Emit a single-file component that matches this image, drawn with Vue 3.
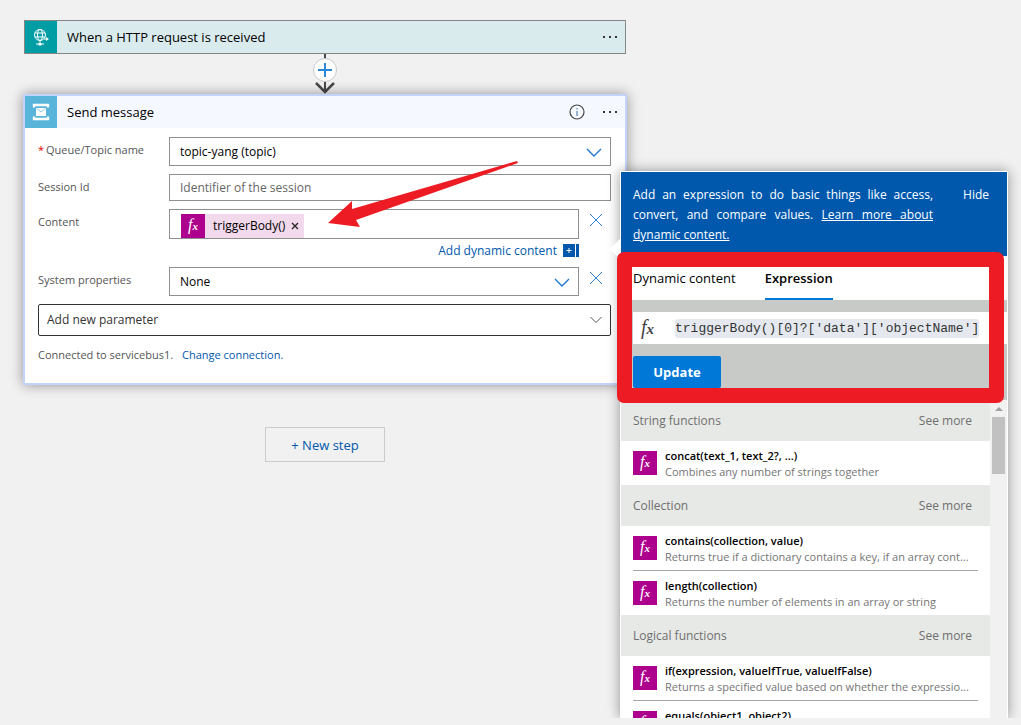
<script setup>
import { ref } from 'vue'

const topic = ref('topic-yang (topic)')
const sessionId = ref('')
const systemProps = ref('None')
const newParam = ref('Add new parameter')
const expression = ref("triggerBody()[0]?['data']['objectName']")
const activeTab = ref('Expression')
const tabs = ['Dynamic content', 'Expression']

const groups = [
  {
    name: 'String functions',
    items: [
      { name: 'concat(text_1, text_2?, ...)', desc: 'Combines any number of strings together' },
    ],
  },
  {
    name: 'Collection',
    items: [
      {
        name: 'contains(collection, value)',
        desc: 'Returns true if a dictionary contains a key, if an array cont...',
      },
      { name: 'length(collection)', desc: 'Returns the number of elements in an array or string' },
    ],
  },
  {
    name: 'Logical functions',
    items: [
      {
        name: 'if(expression, valueIfTrue, valueIfFalse)',
        desc: 'Returns a specified value based on whether the expressio...',
      },
      { name: 'equals(object1, object2)', desc: 'Returns true if two values are equal' },
    ],
  },
]
</script>

<template>
  <div class="page">
    <main class="flow">
      <section class="trigger">
        <span class="trigger-icon">
          <svg width="18" height="20" viewBox="0 0 18 20" fill="none" stroke="#fff">
            <circle cx="8" cy="8" r="5.500" />
            <ellipse cx="8" cy="8" rx="2.500" ry="5.500" />
            <path d="M3 6h10M3 10h10M8 13.500v3M4 17h8" />
            <path d="M12 12h3" />
            <path d="M14 10l3 2-3 2z" fill="#fff" stroke="none" />
            <path d="M6.500 16h3v2.500h-3z" fill="#fff" stroke="none" />
          </svg>
        </span>
        <h2>When a HTTP request is received</h2>
        <button class="dots" aria-label="Trigger menu"><i /><i /><i /></button>
      </section>

      <div class="connector">
        <svg width="26" height="40" viewBox="0 0 26 40" fill="none">
          <path d="M13 0v37" stroke="#484848" stroke-width="2" />
          <path d="M4 29l9 9 9-9" stroke="#484848" stroke-width="2.500" />
          <circle cx="13" cy="16" r="11.500" fill="#fff" stroke="#c8c8c8" />
          <path d="M6 16h14M13 9v14" stroke="#2b88d8" stroke-width="2" />
        </svg>
      </div>

      <section class="card">
        <header class="card-head">
          <span class="card-icon">
            <svg width="18" height="18" viewBox="0 0 18 18">
              <path d="M2 4.500V2h14v2.500M2 13.500V16h14v-2.500" fill="none" stroke="#fff" stroke-width="2.400" />
              <rect x="4" y="5" width="10" height="8" fill="#fff" />
              <path d="M4.500 5.500L9 9l4.500-3.500" fill="none" stroke="#8fcbe5" />
            </svg>
          </span>
          <h2>Send message</h2>
          <button class="info" aria-label="Information">
            <svg width="16" height="16" viewBox="0 0 16 16" fill="none">
              <circle cx="8" cy="8" r="7" stroke="#444" stroke-width="1.200" />
              <path d="M8 7v5M8 4v1.500" stroke="#3a6ea5" />
            </svg>
          </button>
          <button class="dots" aria-label="Action menu"><i /><i /><i /></button>
        </header>

        <div class="form">
          <div class="row">
            <label for="topic"><span class="required">*</span>Queue/Topic name</label>
            <div class="control">
              <select id="topic" v-model="topic" class="box">
                <option>topic-yang (topic)</option>
              </select>
              <svg class="chevron" width="16" height="10" viewBox="0 0 16 10">
                <path d="M1 1l7 7 7-7" fill="none" stroke="#1f77d0" stroke-width="1.400" />
              </svg>
            </div>
          </div>

          <div class="row">
            <label for="session">Session Id</label>
            <div class="control">
              <input
                id="session"
                v-model="sessionId"
                class="box session"
                placeholder="Identifier of the session"
              >
            </div>
          </div>

          <div class="row">
            <label id="content-label">Content</label>
            <div class="control">
              <div class="box token-box" role="group" aria-labelledby="content-label">
                <span class="token">
                  <span class="fx">f<small>x</small></span>
                  <span>triggerBody()</span>
                  <button aria-label="Remove token">
                    <svg width="8" height="8" viewBox="0 0 8 8">
                      <path d="M1 1l6 6M7 1l-6 6" stroke="#222" stroke-width="1.300" />
                    </svg>
                  </button>
                </span>
              </div>
              <a href="#" class="add-dynamic">
                Add dynamic content
                <svg width="16" height="13" viewBox="0 0 16 13">
                  <path d="M0 0h12v13H0zM13 0h3v13h-3z" fill="#0058ad" />
                  <path d="M3.500 6.500h5M6 4v5" stroke="#fff" />
                </svg>
              </a>
            </div>
            <button class="clear" aria-label="Remove content">
              <svg width="14" height="14" viewBox="0 0 14 14">
                <path d="M1 1l12 12M13 1L1 13" stroke="#2f80d0" />
              </svg>
            </button>
          </div>

          <div class="row">
            <label for="system">System properties</label>
            <div class="control">
              <select id="system" v-model="systemProps" class="box">
                <option>None</option>
              </select>
              <svg class="chevron" width="16" height="10" viewBox="0 0 16 10">
                <path d="M1 1l7 7 7-7" fill="none" stroke="#1f77d0" stroke-width="1.400" />
              </svg>
            </div>
            <button class="clear" aria-label="Remove system properties">
              <svg width="14" height="14" viewBox="0 0 14 14">
                <path d="M1 1l12 12M13 1L1 13" stroke="#2f80d0" />
              </svg>
            </button>
          </div>

          <div class="control add-param">
            <select v-model="newParam" class="box" aria-label="Add new parameter">
              <option>Add new parameter</option>
            </select>
            <svg class="chevron" width="12" height="8" viewBox="0 0 12 8">
              <path d="M0.500 1L6 6.500 11.500 1" fill="none" stroke="#555" />
            </svg>
          </div>

          <p class="connection">
            Connected to servicebus1. <a href="#">Change connection.</a>
          </p>
        </div>

        <svg class="arrow" width="194" height="70" viewBox="0 0 194 70">
          <path d="M1 62L25 40 25 48 190 0 191 2 29 59 33 66z" fill="#ed1c24" />
        </svg>
      </section>

      <button class="new-step">+ New step</button>
    </main>

    <aside class="panel">
      <span class="callout" />
      <header class="panel-head">
        <p>
          Add an expression to do basic things like access, convert, and compare values.
          <a href="#">Learn more about dynamic content.</a>
        </p>
        <button>Hide</button>
      </header>

      <nav class="tabs">
        <button
          v-for="tab in tabs"
          :key="tab"
          :class="{ active: tab === activeTab }"
          @click="activeTab = tab"
        >
          {{ tab }}
        </button>
      </nav>

      <div class="editor">
        <div class="expression">
          <label for="expression" class="fx-dark">f<small>x</small></label>
          <input id="expression" v-model="expression" spellcheck="false">
        </div>
        <button class="update">Update</button>
      </div>

      <div class="functions">
        <div class="list">
          <section v-for="group in groups" :key="group.name">
            <header class="group-head">
              <h3>{{ group.name }}</h3>
              <a href="#">See more</a>
            </header>
            <ul>
              <li v-for="item in group.items" :key="item.name">
                <span class="fx">f<small>x</small></span>
                <div class="text">
                  <strong>{{ item.name }}</strong>
                  <span>{{ item.desc }}</span>
                </div>
              </li>
            </ul>
          </section>
        </div>
        <div class="scrollbar">
          <span class="up" />
          <span class="thumb" />
        </div>
      </div>

      <div class="highlight" />
    </aside>
  </div>
</template>

<style>
body {
  margin: 0;
  background: #f1f1f1;
}
</style>

<style scoped>
.page {
  display: flex;
  align-items: flex-start;
  height: 100vh;
  overflow: hidden;
  font-family: 'Open Sans', 'Noto Sans', sans-serif;
  font-size: 12px;
  line-height: 16px;
  color: #000;
}

* {
  box-sizing: border-box;
}

button {
  padding: 0;
  border: 0;
  background: none;
  font: inherit;
  color: inherit;
}

h2,
h3,
p,
ul {
  margin: 0;
  padding: 0;
  font-weight: normal;
  list-style: none;
}

a {
  color: #0058ad;
  text-decoration: none;
}

svg {
  display: block;
}

.flow {
  flex: 1;
  min-width: 0;
  display: flex;
  flex-direction: column;
  padding: 20px 0 0 24px;
}

.trigger {
  display: flex;
  align-items: center;
  height: 34px;
  border: 1px solid #868686;
  background: #daebee;
}

h2 {
  flex: 1;
  font-size: 13px;
  padding-left: 10px;
}

.trigger-icon,
.card-icon {
  display: flex;
  align-items: center;
  justify-content: center;
  width: 32px;
  height: 32px;
  background: #009da5;
}

.card-icon {
  background: #59b4d9;
}

.dots {
  display: flex;
  gap: 4px;
  padding: 8px;
}

.dots i {
  width: 2px;
  height: 2px;
  background: #333;
}

.connector {
  display: flex;
  justify-content: center;
  height: 40px;
}

.card {
  position: relative;
  border: 2px solid #c3d3fb;
  margin: 0 -1px;
  background: #fff;
  box-shadow: 0 0 12px rgba(0, 0, 0, 0.4);
}

.card-head {
  display: flex;
  align-items: center;
  height: 32px;
  background: #f5f8ff;
}

.info {
  margin-right: 10px;
}

.form {
  padding: 9px 14px 20px 13px;
  color: #555;
}

.row {
  display: flex;
  align-items: flex-start;
  margin-bottom: 8px;
}

.row label {
  flex: none;
  width: 131px;
  padding-top: 5px;
  font-size: 11px;
}

.required {
  color: #e00000;
  margin-right: 2px;
}

.control {
  position: relative;
  flex: 1;
}

.box {
  display: block;
  width: 100%;
  height: 29px;
  padding: 0 10px;
  border: 1px solid #8f8f8f;
  border-radius: 0;
  background: #fff;
  appearance: none;
  font: inherit;
  color: #000;
}

.session {
  height: 27px;
}

.session::placeholder {
  color: #666;
  opacity: 1;
}

.chevron {
  position: absolute;
  right: 9px;
  top: 11px;
  pointer-events: none;
}

.token-box {
  height: 30px;
  padding: 4px 11px 0;
}

.token {
  display: inline-flex;
  align-items: center;
  gap: 6px;
  height: 24px;
  padding-right: 5px;
  background: #f2d9ec;
}

.fx {
  flex: none;
  width: 24px;
  height: 24px;
  margin-right: 2px;
  background: #ad008c;
  color: #fff;
  font: italic 16px/22px 'Liberation Serif', serif;
  text-align: center;
}

.fx small,
.fx-dark small {
  font-size: 11px;
  font-weight: bold;
}

.add-dynamic {
  display: flex;
  justify-content: flex-end;
  align-items: center;
  gap: 6px;
  padding-top: 3px;
  line-height: 17px;
}

.clear {
  width: 32px;
  padding: 4px 0 0 10px;
}

.add-param .box {
  height: 32px;
  padding: 0 8px;
  border: 1px solid #333;
  border-radius: 2px;
  color: #333;
}

.add-param .chevron {
  top: 12px;
}

.connection {
  padding-top: 11px;
  font-size: 11px;
}

.connection a {
  margin-left: 6px;
}

.arrow {
  position: absolute;
  left: 302px;
  top: 65px;
}

.new-step {
  align-self: center;
  width: 120px;
  height: 35px;
  margin-top: 42px;
  border: 1px solid #ccc;
  font-size: 13px;
  color: #0058ad;
}

.panel {
  position: relative;
  display: flex;
  flex-direction: column;
  flex: none;
  width: 388px;
  height: calc(100vh - 178px);
  margin: 171px 13px 0 -6px;
  border: 1px solid #fff;
  border-bottom: 0;
  background: #fff;
  box-shadow: 0 0 12px rgba(0, 0, 0, 0.4);
  clip-path: inset(-16px -16px 0 -16px);
}

.callout {
  position: absolute;
  left: -8px;
  top: 69px;
  width: 16px;
  height: 16px;
  background: #fff;
  transform: rotate(45deg);
}

.panel-head {
  position: relative;
  flex: none;
  display: flex;
  align-items: flex-start;
  justify-content: space-between;
  height: 84px;
  padding: 13px 18px 0 12px;
  background: #0058ad;
  color: #fff;
}

.panel-head p {
  width: 300px;
  line-height: 20px;
  text-align: justify;
}

.panel-head a {
  color: #fff;
  text-decoration: underline;
}

.panel-head button {
  line-height: 20px;
}

.tabs {
  flex: none;
  display: flex;
  gap: 29px;
  height: 44px;
  padding-left: 12px;
  font-size: 13px;
}

.tabs button {
  padding-top: 2px;
  border-bottom: 2px solid transparent;
}

.tabs .active {
  border-color: #0078d7;
  font-weight: 600;
}

.editor {
  flex: none;
  height: 100px;
  padding: 12px 0 0 12px;
  background: #c8cac7;
}

.expression {
  display: flex;
  align-items: center;
  height: 32px;
  margin-bottom: 12px;
  background: #fff;
}

.fx-dark {
  width: 42px;
  padding-left: 8px;
  font: italic 20px/28px 'Liberation Serif', serif;
  color: #444;
}

.fx-dark small {
  font-size: 15px;
}

.expression input {
  width: 304px;
  height: 19px;
  padding: 0;
  border: 0;
  border-radius: 3px;
  background: #e5e9ef;
  font: 13px 'Liberation Mono', monospace;
  color: #333;
}

.update {
  width: 88px;
  height: 32px;
  border-radius: 2px;
  background: #0078d7;
  font-size: 13px;
  font-weight: bold;
  color: #fff;
}

.functions {
  flex: 1;
  min-height: 0;
  display: flex;
}

.list {
  flex: 1;
  min-width: 0;
  overflow: hidden;
}

.group-head {
  display: flex;
  align-items: center;
  justify-content: space-between;
  height: 41px;
  padding: 0 18px 0 12px;
  background: #e7e9e6;
  color: #6f6f6f;
}

.group-head h3,
.group-head a {
  font-size: 12px;
  color: inherit;
}

li {
  display: flex;
  height: 44px;
  margin: 0 12px;
  padding-top: 7px;
}

li + li {
  height: 45px;
  border-top: 1px solid #a6a6a6;
}

li .fx {
  margin: 3px 8px 0 0;
}

.text {
  min-width: 0;
  font-size: 11px;
}

.text strong,
.text span {
  display: block;
  overflow: hidden;
  white-space: nowrap;
  text-overflow: ellipsis;
}

.text strong {
  font-weight: 600;
}

.text span {
  color: #757575;
}

.scrollbar {
  display: flex;
  flex-direction: column;
  align-items: center;
  gap: 6px;
  width: 17px;
  padding-top: 7px;
  background: #f1f1f1;
}

.up {
  border: 4px solid transparent;
  border-top: 0;
  border-bottom-color: #a0a0a0;
}

.thumb {
  width: 13px;
  height: 57px;
  background: #c1c1c1;
}

.highlight {
  position: absolute;
  left: -4px;
  top: 80px;
  right: 3px;
  height: 151px;
  border: 15px solid #ed1c24;
  border-radius: 7px;
  pointer-events: none;
}
</style>
